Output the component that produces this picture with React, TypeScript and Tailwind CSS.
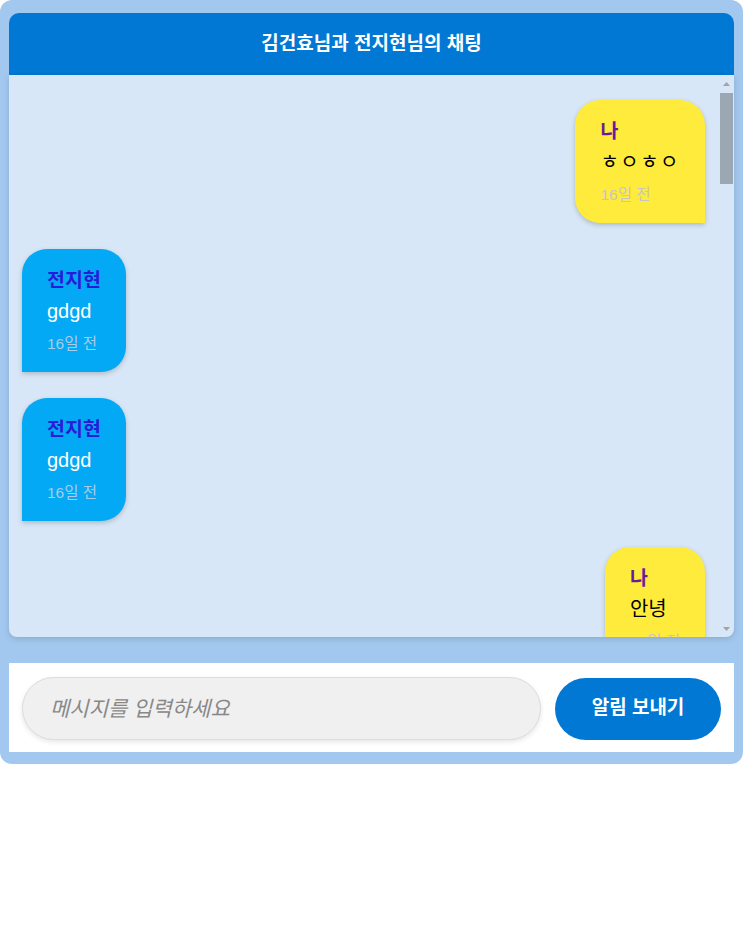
import React from "react";

type Msg = { me: boolean; name: string; text: string; time: string; wide?: boolean };

const messages: Msg[] = [
  { me: true, name: "나", text: "ㅎㅇㅎㅇ", time: "16일 전", wide: true },
  { me: false, name: "전지현", text: "gdgd", time: "16일 전" },
  { me: false, name: "전지현", text: "gdgd", time: "16일 전" },
  { me: true, name: "나", text: "안녕", time: "16일 전" },
  { me: false, name: "전지현", text: "안녕하세요", time: "16일 전" },
  { me: true, name: "나", text: "ㅎㅇ", time: "15일 전", wide: true },
];

const font = {
  fontFamily:
    '"Liberation Sans", "Noto Sans CJK KR", "Noto Sans", sans-serif',
};

function Bubble({ m }: { m: Msg }) {
  const textCls = m.wide
    ? "text-[20px] leading-[28px] mt-[3px] tracking-[1.5px]"
    : "text-[20px] leading-[28px] mt-[3px]";
  if (m.me) {
    return (
      <div className="flex justify-end">
        <div className="bg-[#ffeb3b] rounded-[25px] rounded-br-none px-[25px] pt-[17px] pb-[17px] shadow-[0_2px_5px_rgba(0,0,0,0.2)]">
          <div className="text-[19.5px] leading-[28px] font-bold text-[#6a1b9a]">{m.name}</div>
          <div className={textCls + " text-black"}>{m.text}</div>
          <div className="text-[15.5px] leading-[22px] mt-[8px] text-[#c6c6c6]">{m.time}</div>
        </div>
      </div>
    );
  }
  return (
    <div className="flex justify-start">
      <div className="bg-[#03a9f4] rounded-[25px] rounded-bl-none px-[25px] pt-[17px] pb-[17px] shadow-[0_2px_5px_rgba(0,0,0,0.2)]">
        <div className="text-[19.5px] leading-[28px] font-bold text-[#2a1bd8]">{m.name}</div>
        <div className={textCls + " text-white"}>{m.text}</div>
        <div className="text-[15.5px] leading-[22px] mt-[8px] text-[#a9cbe6]">{m.time}</div>
      </div>
    </div>
  );
}

function ScrollBar() {
  return (
    <div className="w-[15px] flex flex-col shrink-0">
      <div className="h-[15px] flex items-center justify-center pt-[2px]">
        <svg width="7" height="4" viewBox="0 0 7 4">
          <polygon points="0,4 7,4 3.5,0" fill="#a3a3a3" />
        </svg>
      </div>
      <div className="mt-[3px] h-[91px] ml-[1px] mr-[1px] bg-[#9ca7b4]" />
      <div className="flex-1" />
      <div className="h-[15px] flex items-center justify-center pb-[2px]">
        <svg width="7" height="4" viewBox="0 0 7 4">
          <polygon points="0,0 7,0 3.5,4" fill="#a3a3a3" />
        </svg>
      </div>
    </div>
  );
}

export default function App() {
  return (
    <div className="bg-white min-h-[942px]" style={font}>
      <div className="w-[743px] bg-[#a3c8ef] rounded-[12px] pt-[13px] px-[9px] pb-[12px]">
        <div className="bg-[#0078d4] rounded-t-[10px] h-[62px] flex items-center justify-center">
          <span className="text-white font-bold text-[19px]">김건효님과 전지현님의 채팅</span>
        </div>
        <div className="h-[562px] bg-[#d8e7f7] rounded-b-[8px] shadow-[0_2px_6px_rgba(0,0,0,0.15)] flex overflow-hidden">
          <div className="flex-1 overflow-hidden">
            <div className="flex flex-col gap-[26px] pt-[25px] pb-[25px] pl-[13px] pr-[14px]">
              {messages.map((m, i) => (
                <Bubble key={i} m={m} />
              ))}
            </div>
          </div>
          <ScrollBar />
        </div>
        <div className="mt-[26px] bg-white flex items-center gap-[14px] pt-[14px] pb-[12px] pl-[13px] pr-[13px]">
          <input
            className="flex-1 h-[63px] rounded-full bg-[#f0f0f0] border border-[#dddddd] pl-[27px] text-[21px] italic placeholder:text-[#888888] outline-none shadow-[0_2px_5px_rgba(0,0,0,0.1)]"
            placeholder="메시지를 입력하세요"
            style={font}
          />
          <button className="w-[166px] h-[62px] rounded-full bg-[#0078d4] text-white font-bold text-[19px]">
            알림 보내기
          </button>
        </div>
      </div>
    </div>
  );
}
